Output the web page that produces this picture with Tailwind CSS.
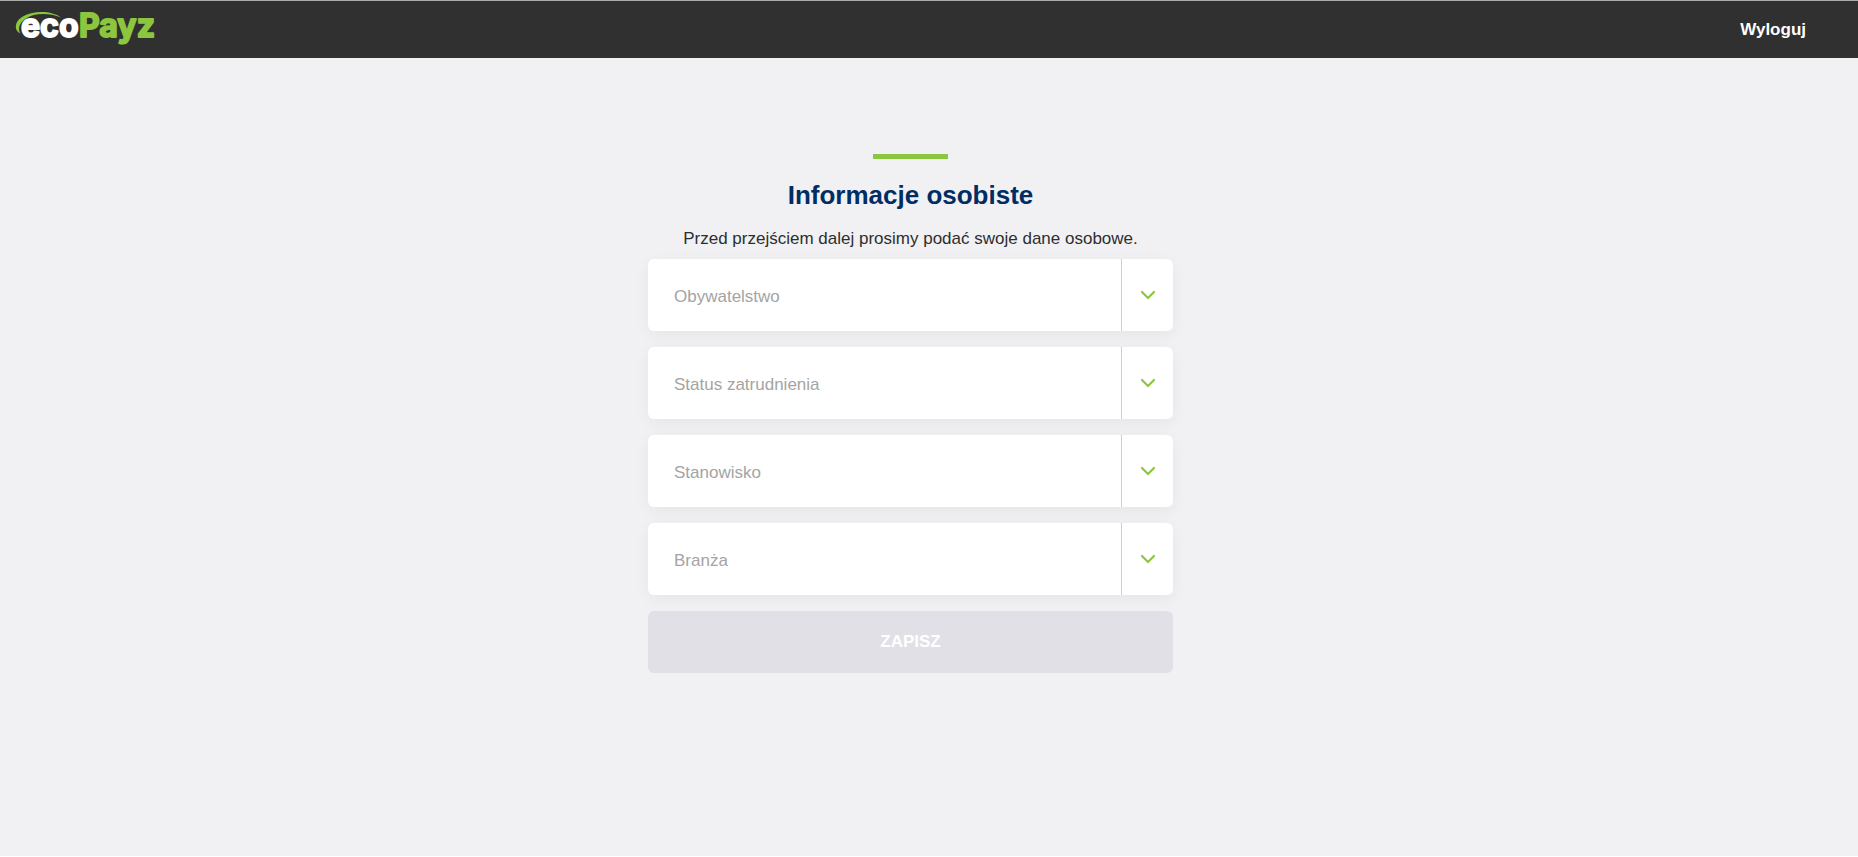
<!DOCTYPE html>
<html lang="pl">
<head>
<meta charset="utf-8">
<meta name="viewport" content="width=device-width, initial-scale=1">
<title>ecoPayz – Informacje osobiste</title>
<script src="https://cdn.jsdelivr.net/npm/@tailwindcss/browser@4"></script>
</head>
<body class="flex min-h-screen flex-col border-b border-white bg-[#f1f1f4] font-['Liberation_Sans',Arial,sans-serif] text-[17px] leading-6">
  <header class="flex h-[58px] items-center justify-between border-t border-[#a9acae] bg-[#303030] pl-3 pr-[52px]">
    <a href="#" aria-label="ecoPayz">
      <svg class="block" width="152" height="57" viewBox="12 1 152 57" role="img" aria-label="ecoPayz">
        <path d="M20.500 33.500C14 31 14 22 22 17C33 10 52 10.500 61 17.500C49 12.500 34 13 26 18.500C19 23 17.500 29 20.500 33.500Z" fill="#8cc63e"/>
        <g font-family="Inter, 'Open Sans', sans-serif" font-weight="700" font-size="32" stroke-width="1.800" stroke-linejoin="round">
          <text x="21" y="37" fill="#fff" stroke="#fff">eco</text>
          <text x="79" y="37" fill="#8cc63e" stroke="#8cc63e">Payz</text>
        </g>
      </svg>
    </a>
    <a href="#" class="font-bold text-white">Wyloguj</a>
  </header>

  <main class="flex flex-1 flex-col items-center pr-[37px] pt-24">
    <div class="h-[5px] w-[75px] bg-[#8cc63e]"></div>
    <h1 class="mt-5 text-[26px] font-bold leading-8 text-[#002d64]">Informacje osobiste</h1>
    <p class="mt-4 text-[#2e2e2e]">Przed przejściem dalej prosimy podać swoje dane osobowe.</p>

    <form class="mt-2 flex w-full max-w-[525px] flex-col gap-4">
      <div class="relative flex h-[72px] rounded-md bg-white shadow-[0_4px_16px_rgba(0,0,0,0.05)]">
        <select aria-label="Obywatelstwo" class="w-full appearance-none rounded-md bg-transparent pl-[26px] pr-16 pt-[3px] text-[#a4a4a4]"><option>Obywatelstwo</option></select>
        <span class="pointer-events-none absolute inset-y-0 right-0 flex w-[52px] items-center justify-center border-l border-[#cfcfcf]">
          <svg width="16" height="10" viewBox="0 0 16 10" fill="none" stroke="#8cc63e" stroke-width="2.200" stroke-linecap="round" stroke-linejoin="round"><path d="M2 2 8 8l6-6"/></svg>
        </span>
      </div>
      <div class="relative flex h-[72px] rounded-md bg-white shadow-[0_4px_16px_rgba(0,0,0,0.05)]">
        <select aria-label="Status zatrudnienia" class="w-full appearance-none rounded-md bg-transparent pl-[26px] pr-16 pt-[3px] text-[#a4a4a4]"><option>Status zatrudnienia</option></select>
        <span class="pointer-events-none absolute inset-y-0 right-0 flex w-[52px] items-center justify-center border-l border-[#cfcfcf]">
          <svg width="16" height="10" viewBox="0 0 16 10" fill="none" stroke="#8cc63e" stroke-width="2.200" stroke-linecap="round" stroke-linejoin="round"><path d="M2 2 8 8l6-6"/></svg>
        </span>
      </div>
      <div class="relative flex h-[72px] rounded-md bg-white shadow-[0_4px_16px_rgba(0,0,0,0.05)]">
        <select aria-label="Stanowisko" class="w-full appearance-none rounded-md bg-transparent pl-[26px] pr-16 pt-[3px] text-[#a4a4a4]"><option>Stanowisko</option></select>
        <span class="pointer-events-none absolute inset-y-0 right-0 flex w-[52px] items-center justify-center border-l border-[#cfcfcf]">
          <svg width="16" height="10" viewBox="0 0 16 10" fill="none" stroke="#8cc63e" stroke-width="2.200" stroke-linecap="round" stroke-linejoin="round"><path d="M2 2 8 8l6-6"/></svg>
        </span>
      </div>
      <div class="relative flex h-[72px] rounded-md bg-white shadow-[0_4px_16px_rgba(0,0,0,0.05)]">
        <select aria-label="Branża" class="w-full appearance-none rounded-md bg-transparent pl-[26px] pr-16 pt-[3px] text-[#a4a4a4]"><option>Branża</option></select>
        <span class="pointer-events-none absolute inset-y-0 right-0 flex w-[52px] items-center justify-center border-l border-[#cfcfcf]">
          <svg width="16" height="10" viewBox="0 0 16 10" fill="none" stroke="#8cc63e" stroke-width="2.200" stroke-linecap="round" stroke-linejoin="round"><path d="M2 2 8 8l6-6"/></svg>
        </span>
      </div>
      <button type="submit" disabled class="relative h-[62px] rounded-md bg-[#e0e0e6] font-bold text-white">ZAPISZ</button>
    </form>
  </main>
</body>
</html>
